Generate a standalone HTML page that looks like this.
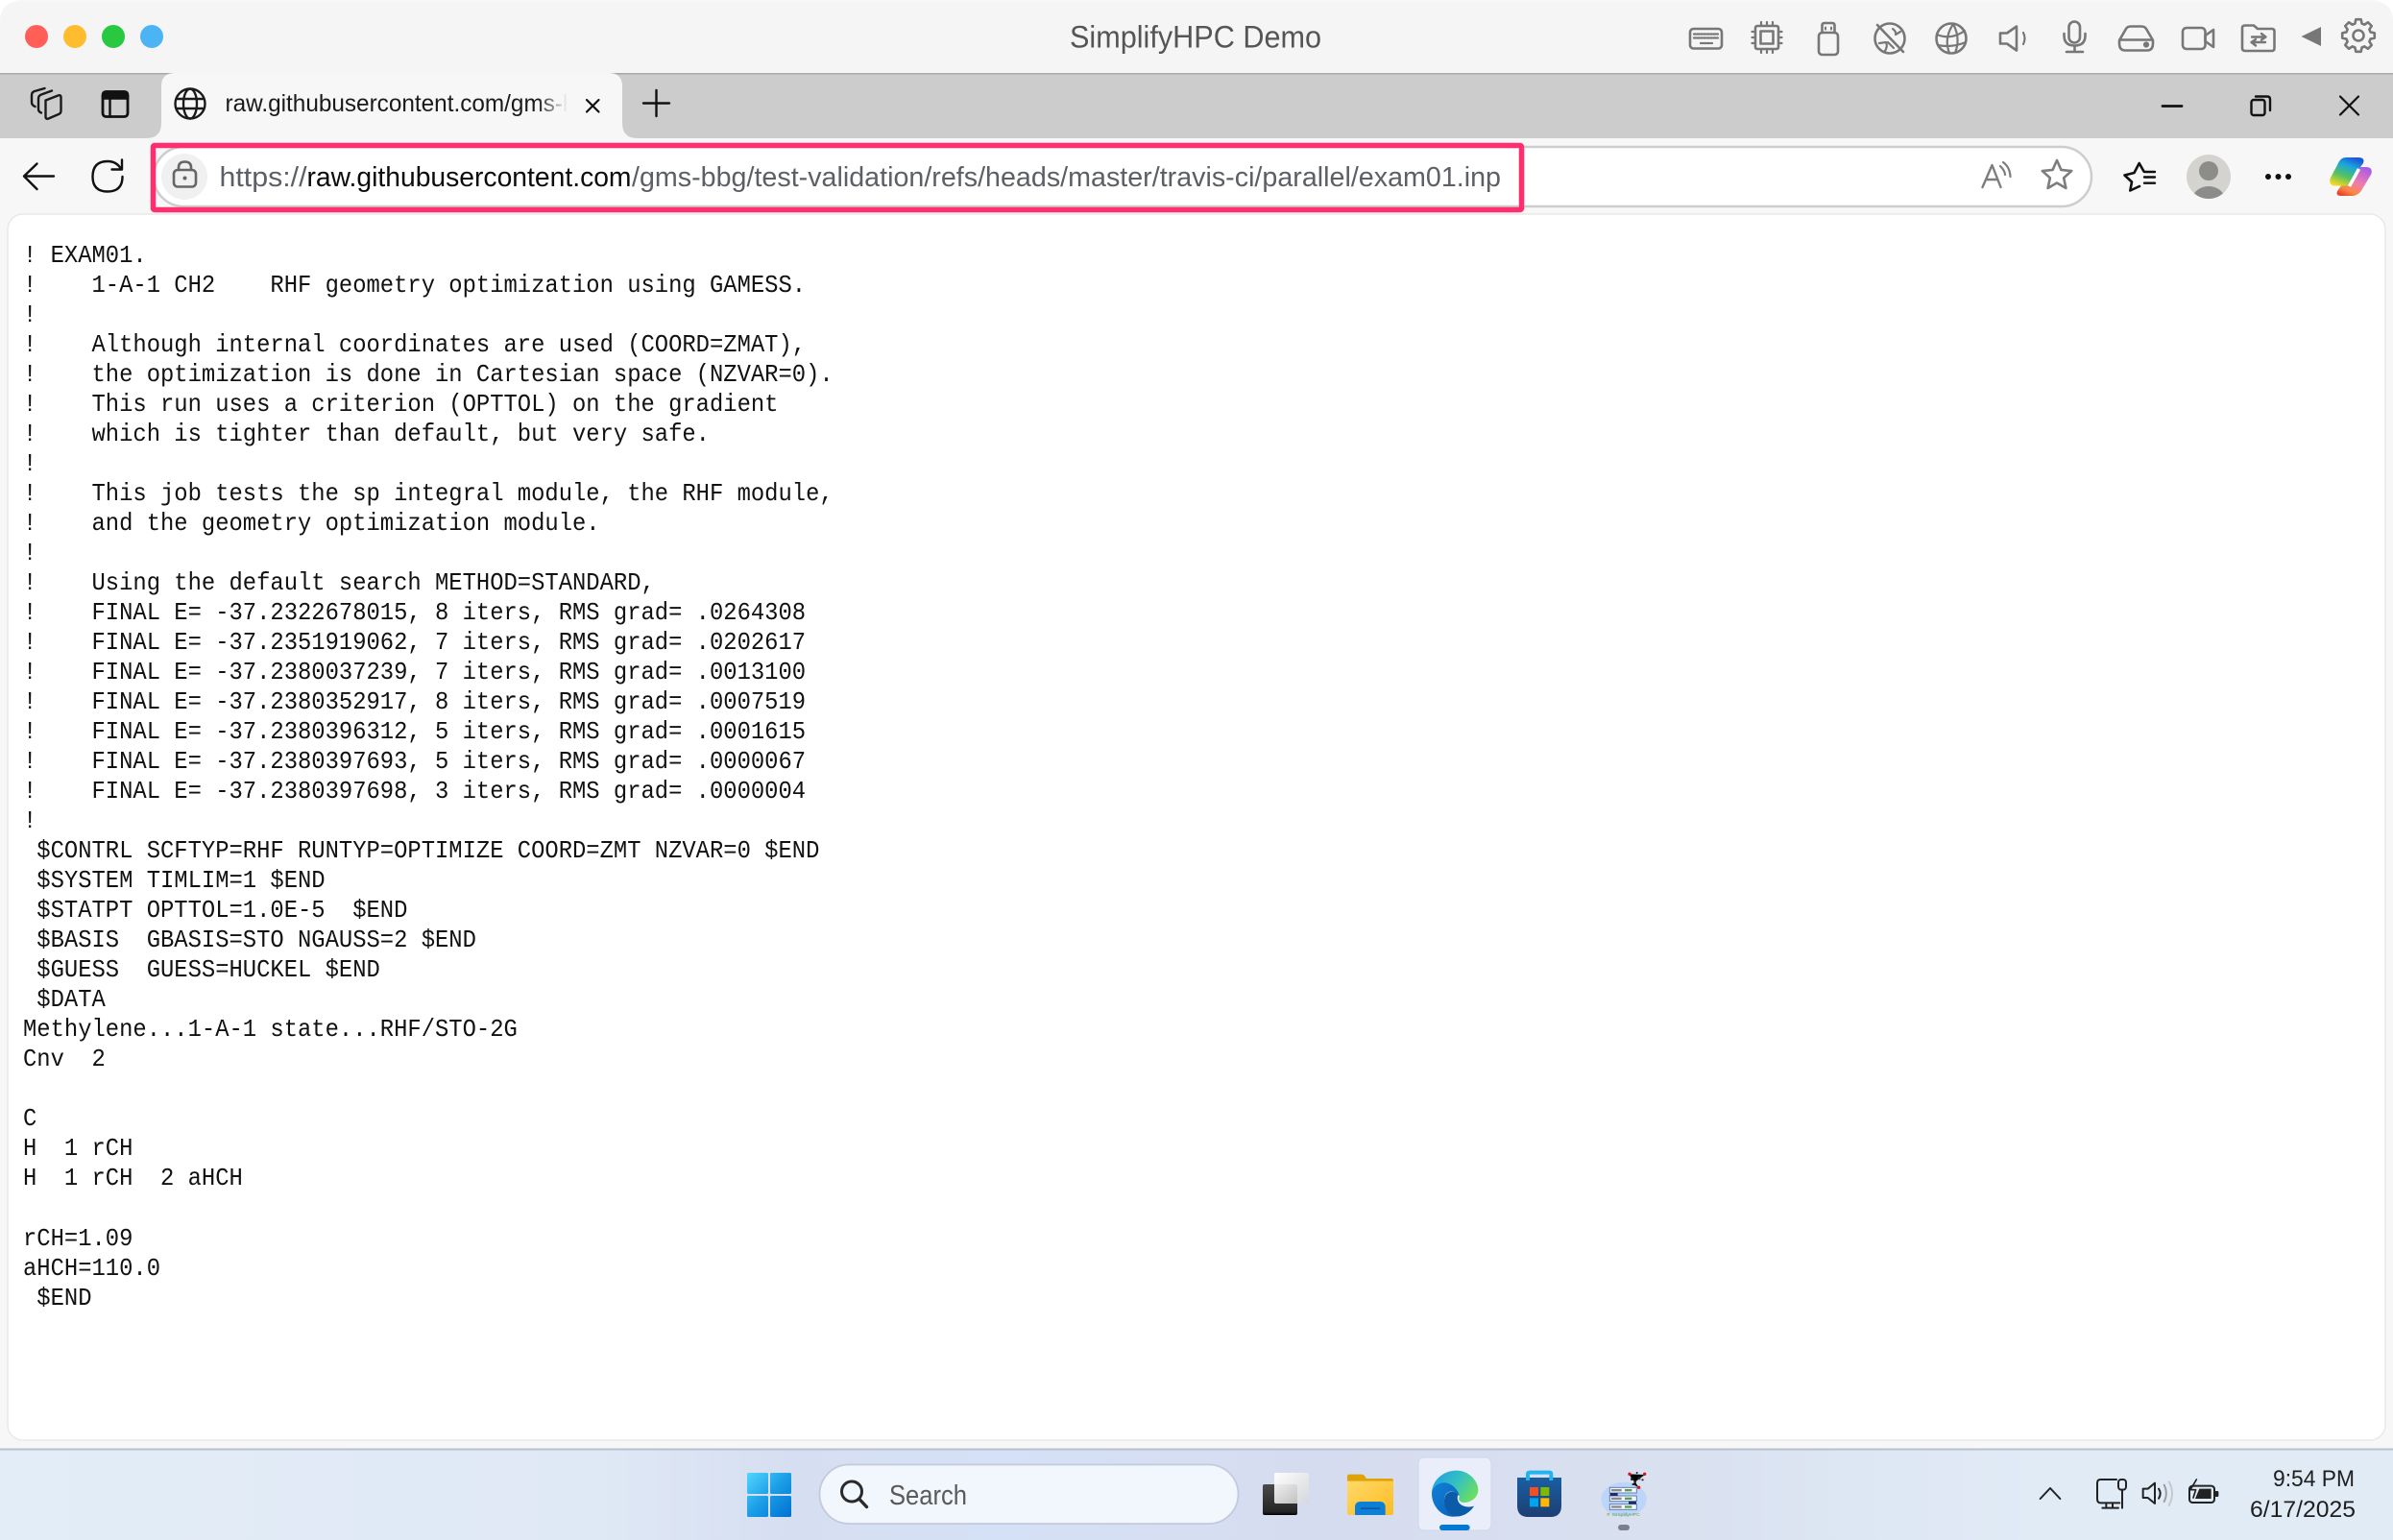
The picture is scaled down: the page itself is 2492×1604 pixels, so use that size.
<!DOCTYPE html>
<html lang="en"><head><meta charset="utf-8"><title>SimplifyHPC Demo</title>
<style>
html,body{margin:0;padding:0;background:#fff;width:2492px;height:1604px;overflow:hidden}
svg{position:absolute;left:0;top:0;display:block}
text{font-family:"Liberation Sans",sans-serif;white-space:pre}
pre{position:absolute;left:23.5px;top:250.5px;margin:0;font:26px/31.03px "Liberation Mono",monospace;color:#111;transform:scaleX(.9165);transform-origin:0 0;white-space:pre}
</style></head><body>
<svg width="2492" height="1604" viewBox="0 0 2492 1604" xmlns="http://www.w3.org/2000/svg">
<defs>
<linearGradient id="tb" x1="0" x2="1" y1="0" y2="0"><stop offset="0" stop-color="#e3edf7"/><stop offset=".25" stop-color="#dfe8f5"/><stop offset=".33" stop-color="#d6dff1"/><stop offset=".42" stop-color="#d5e1f6"/><stop offset=".55" stop-color="#d6dcef"/><stop offset=".7" stop-color="#d9e1f0"/><stop offset=".85" stop-color="#e1ebf6"/><stop offset="1" stop-color="#e1ebf6"/></linearGradient>
<linearGradient id="win" gradientUnits="userSpaceOnUse" x1="778" y1="1534" x2="824" y2="1580"><stop offset="0" stop-color="#52d6ff"/><stop offset=".5" stop-color="#1a9de6"/><stop offset="1" stop-color="#0070d2"/></linearGradient>
<linearGradient id="fade" x1="0" x2="1" y1="0" y2="0"><stop offset="0" stop-color="#f7f7f7" stop-opacity="0"/><stop offset="1" stop-color="#f7f7f7"/></linearGradient>
<linearGradient id="tv1" x1="0" x2="0" y1="0" y2="1"><stop offset="0" stop-color="#4b4b4b"/><stop offset=".9" stop-color="#242424"/><stop offset="1" stop-color="#000"/></linearGradient>
<linearGradient id="tv2" x1="0" x2="1" y1="0" y2="1"><stop offset="0" stop-color="#fff" stop-opacity=".98"/><stop offset="1" stop-color="#d8d8d8" stop-opacity=".8"/></linearGradient>
<linearGradient id="fy" x1="0" x2="1" y1="0" y2="1"><stop offset="0" stop-color="#ffd968"/><stop offset="1" stop-color="#fcbc23"/></linearGradient>
<linearGradient id="e1" x1="0" x2="1" y1=".2" y2=".7"><stop offset="0" stop-color="#1f9fe6"/><stop offset=".5" stop-color="#35c1c0"/><stop offset="1" stop-color="#6fe05a"/></linearGradient>
<linearGradient id="e2" x1="0" x2="1" y1="0" y2="1"><stop offset="0" stop-color="#0f80d8"/><stop offset="1" stop-color="#0c62b5"/></linearGradient>
<linearGradient id="st" x1="0" x2="0" y1="0" y2="1"><stop offset="0" stop-color="#1a5ea3"/><stop offset="1" stop-color="#1d3f73"/></linearGradient>
<linearGradient id="c1" x1=".7" x2=".25" y1="0" y2="1"><stop offset="0" stop-color="#1b57d8"/><stop offset=".3" stop-color="#1aa6dd"/><stop offset=".65" stop-color="#54c25d"/><stop offset="1" stop-color="#f4d823"/></linearGradient>
<linearGradient id="c2" x1=".8" x2=".2" y1="0" y2="1"><stop offset="0" stop-color="#a85be8"/><stop offset=".5" stop-color="#f07cae"/><stop offset=".8" stop-color="#fa8a45"/><stop offset="1" stop-color="#e8442e"/></linearGradient>
<clipPath id="av"><circle cx="2300" cy="184" r="23"/></clipPath>
<clipPath id="tc"><rect x="220" y="80" width="371" height="60"/></clipPath>
</defs>

<rect width="2492" height="1604" fill="#f7f7f7"/>
<path d="M0 78V22Q0 2 22 2H2470Q2492 2 2492 22V78Z" fill="#f5f5f5"/>
<path d="M0 0H22Q0 2 0 22ZM2492 0H2470Q2492 2 2492 22Z" fill="#fff"/>
<rect y="76" width="2492" height="68" fill="#cccccc"/>
<rect y="76" width="2492" height="1.5" fill="#a9a9a9"/>
<path d="M152 144Q168 144 168 128V90Q168 76 182 76H634Q648 76 648 90V128Q648 144 664 144Z" fill="#f7f7f7"/>

<rect x="8" y="223" width="2476" height="1277" rx="16" fill="#fff" stroke="#e9e9e9" stroke-width="1.5"/>

<circle cx="38" cy="38" r="12" fill="#ff5f57"/><circle cx="78" cy="38" r="12" fill="#febc2e"/><circle cx="118" cy="38" r="12" fill="#28c840"/><circle cx="158" cy="38" r="12" fill="#4cb3f5"/>

<text x="1114" y="49.5" font-size="32" fill="#555" textLength="262" lengthAdjust="spacingAndGlyphs">SimplifyHPC Demo</text>

<g fill="none" stroke="#777" stroke-width="2.6" stroke-linecap="round" stroke-linejoin="round">
<rect x="1760" y="30" width="33" height="20.5" rx="3.5"/>
<path d="M1764 35.5h25M1764 39.5h25M1771 45h12" stroke-dasharray="2 1.4" stroke-width="2.2"/>
<rect x="1828" y="27" width="24" height="24" rx="2"/><rect x="1833.5" y="32.5" width="13" height="13"/>
<path d="M1834 23v3M1840 23v3M1846 23v3M1834 52v3M1840 52v3M1846 52v3M1824.5 33h2M1824.5 39h2M1824.5 45h2M1853.5 33h2M1853.5 39h2M1853.5 45h2" stroke-width="2.2"/>
<rect x="1894" y="34" width="20" height="23" rx="3.5"/><path d="M1897.5 34V26.5Q1897.5 24 1900 24H1908Q1910.5 24 1910.5 26.5V34"/><path d="M1901 28.5v2M1907 28.5v2" stroke-width="2"/>
<circle cx="1968" cy="40" r="15.5"/><path d="M1955 26L1982 54"/><path d="M1971 30Q1975 33 1974 36L1979 33M1957 45L1964 44Q1966 48 1963 53M1966 44L1972 50" stroke-width="2.2"/>
<circle cx="2032" cy="40" r="15.5"/><path d="M2017 36Q2032 42 2046 32M2018 47Q2032 50 2047 44M2034 25Q2024 40 2030 55M2034 25Q2042 40 2036 55" stroke-width="2.2"/>
<path d="M2083 34.5V45.5H2090L2100 52.5V27.5L2090 34.5Z"/><path d="M2107 34Q2110 40 2107 46" stroke-width="2.2"/>
<rect x="2154.5" y="22.5" width="11.5" height="22" rx="5.75"/><path d="M2149.5 35V37Q2149.5 47.5 2160.5 47.5Q2171.5 47.5 2171.5 37V35M2160.5 47.5V53.5M2152 54H2169"/>
<path d="M2207 45V42L2214 30Q2215.5 27.5 2219 27.5H2230Q2233.5 27.5 2235 30L2242 42V45Q2242 52.5 2236 52.5H2213Q2207 52.5 2207 45Z"/><path d="M2207.5 41.5H2241.5"/><circle cx="2235" cy="46.5" r="1.8" fill="#777"/>
<rect x="2273" y="29" width="23.5" height="22" rx="4"/><path d="M2296.5 37L2305 31V49L2296.5 43Z"/>
<path d="M2335 33V29Q2335 26.5 2338 26.5H2347L2351 30H2366Q2368.5 30 2368.5 32.5V50Q2368.5 53 2366 53H2338Q2335 53 2335 50Z"/>
<path d="M2345 38.5H2359M2355 35L2359.5 38.5L2355 41.5M2359 44H2345M2349 41L2344.5 44L2349 47.5" stroke-width="2.4"/>
<path d="M2396.5 38L2417 28V48Z" fill="#777" stroke="none"/>
<path transform="translate(2456 37)" d="M-3.58-12.5L-2.66-16.79L2.66-16.79L3.58-12.5L6.31-11.37L9.99-13.75L13.75-9.99L11.37-6.31L12.5-3.58L16.79-2.66L16.79 2.66L12.5 3.58L11.37 6.31L13.75 9.99L9.99 13.75L6.31 11.37L3.58 12.5L2.66 16.79L-2.66 16.79L-3.58 12.5L-6.31 11.37L-9.99 13.75L-13.75 9.99L-11.37 6.31L-12.5 3.58L-16.79 2.66L-16.79-2.66L-12.5-3.58L-11.37-6.31L-13.75-9.99L-9.99-13.75L-6.31-11.37Z"/><circle cx="2456" cy="37" r="5.5"/>
</g>

<g fill="none" stroke="#1a1a1a" stroke-width="2.4" stroke-linecap="round" stroke-linejoin="round">
<path d="M47.5 104.5L60.5 99.5Q63.5 98.5 63.5 101.5V115.5Q63.5 118 61 119L50.5 123.5Q47.5 124.5 47.5 121.5Z"/>
<path d="M43 117.5Q40 116.5 40 113.5V103Q40 99.5 43 98.5L54 94.5"/>
<path d="M36.5 111Q33 109.5 33 106.5V99Q33 96 36 95L46.5 92"/>
<rect x="107" y="95.5" width="26" height="26" rx="3.5" stroke="#111" stroke-width="2.8"/><path d="M107 99Q107 95.5 110.5 95.5H129.5Q133 95.5 133 99V102.5H107Z" fill="#111" stroke="#111"/><path d="M114.5 102.5V121.5" stroke="#111"/>
<circle cx="198" cy="108" r="15.5"/><ellipse cx="198" cy="108" rx="7" ry="15.5"/><path d="M183.5 103H212.5M183.5 113H212.5"/>
<path d="M611 104L623.5 116.5M623.5 104L611 116.5" stroke="#111" stroke-width="2.2"/>
<path d="M683.5 94V121M670 107.5H697" stroke="#111"/>
<path d="M2252 110.5H2272" stroke="#111" stroke-width="2.8"/>
<rect x="2344.5" y="104" width="14" height="16" rx="2.5" stroke="#111"/><path d="M2349 100.5H2361Q2364 100.5 2364 103.5V115" stroke="#111"/>
<path d="M2437 100.5L2456 119.5M2456 100.5L2437 119.5" stroke="#111" stroke-width="2.2"/>
<path d="M56 183.5H25.5M38.5 170.5L25 183.5L38.5 197" stroke="#111" stroke-width="2.4"/>
<path d="M126 176Q121.5 168 112 168Q96.5 168 96.5 184Q96.5 199.5 112 199.5Q127.5 199.5 127.5 184M127 166.5V176.5H116.5" stroke="#111" stroke-width="2.4"/>
</g>
<text x="234.5" y="116" font-size="25" fill="#1a1a1a" textLength="365" lengthAdjust="spacingAndGlyphs" clip-path="url(#tc)">raw.githubusercontent.com/gms-b</text>
<rect x="560" y="80" width="31" height="60" fill="url(#fade)"/>

<rect x="160" y="153" width="2018" height="62" rx="31" fill="#fff" stroke="#cdcdcd" stroke-width="2.5"/>
<circle cx="192" cy="184" r="24" fill="#f0f0f0"/>
<g fill="none" stroke="#666" stroke-width="2.6" stroke-linecap="round"><rect x="181" y="177" width="23" height="17.5" rx="4"/><path d="M186 177V174.5Q186 168.5 192.5 168.5Q199 168.5 199 174.5V177"/></g><circle cx="192.5" cy="185.5" r="2" fill="#666"/>
<text x="228.5" y="194" font-size="29" fill="#5c6066" textLength="91" lengthAdjust="spacingAndGlyphs">https://</text>
<text x="319.5" y="194" font-size="29" fill="#0b0b0b" textLength="338" lengthAdjust="spacingAndGlyphs">raw.githubusercontent.com</text>
<text x="658" y="194" font-size="29" fill="#5c6066" textLength="905" lengthAdjust="spacingAndGlyphs">/gms-bbg/test-validation/refs/heads/master/travis-ci/parallel/exam01.inp</text>
<rect x="159.5" y="151.5" width="1425" height="67" rx="1.5" fill="none" stroke="#ff2e6e" stroke-width="5.5"/>

<g fill="none" stroke="#7d7d7d" stroke-width="2.4" stroke-linecap="round" stroke-linejoin="round">
<path d="M2064.5 195L2074.5 172L2083.5 195M2068 187H2080.5"/>
<path d="M2083 173Q2088 178 2088 182M2086 169Q2093 174 2093.5 184" stroke-width="2.2"/>
<path transform="translate(2142 183)" d="M0-16L4.41-6.07L15.2-4.94L7.13 2.32L9.4 12.94L0 7.5L-9.4 12.94L-7.13 2.32L-15.2-4.94L-4.41-6.07Z" stroke-width="2.6"/>
<path d="M2232.5 178.5L2227.7 170L2222.5 180L2212.5 182.5L2220 189.5L2218.3 198.5L2228 194" stroke="#111" stroke-width="2.6"/>
<path d="M2233 179H2244M2233 184.5H2244M2233 190.7H2244" stroke="#111" stroke-width="2.4"/>
</g>
<circle cx="2300" cy="184" r="23" fill="#d4d3cf"/>
<g clip-path="url(#av)" fill="#8c8c8a"><circle cx="2300" cy="178" r="10"/><ellipse cx="2300" cy="208" rx="17" ry="14"/></g>
<circle cx="2362" cy="184" r="3" fill="#111"/><circle cx="2372.5" cy="184" r="3" fill="#111"/><circle cx="2383" cy="184" r="3" fill="#111"/>
<path d="M2443 164H2456Q2463 164 2461 170L2456 177L2447 193.5H2432Q2425 193.5 2426.5 186L2434 172Q2437 164 2443 164Z" fill="url(#c1)"/>
<path d="M2458 174H2464Q2471 174 2469.5 181L2460 197Q2456 204 2449 204H2438Q2432 204 2434 199L2438 193.5H2446L2454 177Z" fill="url(#c2)"/>
<path d="M2456.5 176L2446.5 194" stroke="#fff" stroke-width="3.5" fill="none"/>

<rect y="1510" width="2492" height="94" fill="url(#tb)"/>
<rect y="1508.5" width="2492" height="2" fill="#b8c0cf"/>
<g fill="url(#win)"><rect x="778" y="1534" width="22" height="22" rx="1.5"/><rect x="802" y="1534" width="22" height="22" rx="1.5"/><rect x="778" y="1558" width="22" height="22" rx="1.5"/><rect x="802" y="1558" width="22" height="22" rx="1.5"/></g>
<rect x="853.5" y="1525.5" width="436" height="61.5" rx="30.7" fill="#f2f6fd" stroke="#c2cadd" stroke-width="1.8"/>
<circle cx="887" cy="1553.5" r="10.5" fill="none" stroke="#2a2a2a" stroke-width="3"/><path d="M895 1561.5L902.5 1569.5" stroke="#2a2a2a" stroke-width="3.4" stroke-linecap="round"/>
<text x="926" y="1567" font-size="29" fill="#5a5a5a" textLength="81" lengthAdjust="spacingAndGlyphs">Search</text>

<rect x="1477" y="1518" width="76" height="76" rx="6" fill="#e9eefa" stroke="#d0d7e8" stroke-width="1"/>
<g transform="translate(1290 1510) scale(.33333)">
<rect x="75" y="108" width="108" height="96" rx="6" fill="url(#tv1)"/>
<rect x="111" y="72" width="108" height="96" rx="6" fill="url(#tv2)"/>
<path d="M339 100V84Q339 77 346 77H385Q392 77 398 90H477Q483 90 483 96V110H339Z" fill="#e0a306"/>
<path d="M339 98H483V198Q483 204 477 204H345Q339 204 339 198Z" fill="url(#fy)"/>
<path d="M363 204V180Q363 162 381 162H440Q458 162 458 180V204Z" fill="#0f7fd6"/>
<rect x="381" y="181" width="60" height="5" fill="#0a5ba5"/>
<path d="M603 137C603 95 640 65 680 65C722 65 748 100 748 125C748 150 725 165 705 165C690 165 684 155 690 145C680 120 660 105 640 107C620 109 605 120 603 137Z" fill="url(#e1)"/>
<path d="M603 137C605 112 630 100 650 104C668 108 685 125 690 145C675 125 650 125 643 148C637 175 655 200 680 208C640 216 603 180 603 137Z" fill="url(#e2)"/>
<path d="M643 150C648 130 672 125 686 140C680 150 684 165 695 172C708 180 722 180 735 176C722 198 695 212 675 208C650 200 638 175 643 150Z" fill="#0c5ba8"/>
<rect x="627" y="234" width="95" height="18" rx="9" fill="#0078d4"/>
<path d="M870 87H1008V175Q1008 210 973 210H905Q870 210 870 175Z" fill="url(#st)"/>
<path d="M903 96V76Q903 71 910 71H970Q976 71 976 76V96" fill="none" stroke="#22b4ee" stroke-width="12"/>
<rect x="909" y="117" width="27" height="27" fill="#f25022"/><rect x="943" y="117" width="27" height="27" fill="#7fba00"/><rect x="909" y="151" width="27" height="27" fill="#00a4ef"/><rect x="943" y="151" width="27" height="27" fill="#ffb900"/>
<ellipse cx="1203" cy="155" rx="71" ry="54" fill="#bcd5f8"/>
<g fill="#f4f6fb" stroke="#5d7fb8" stroke-width="3"><rect x="1159" y="118" width="84" height="17"/><rect x="1159" y="144" width="84" height="17"/><rect x="1159" y="170" width="84" height="17"/></g>
<g fill="#8a8a8a"><rect x="1164" y="123" width="32" height="7"/><rect x="1164" y="149" width="32" height="7"/><rect x="1164" y="175" width="32" height="7"/></g>
<g fill="#5aa04a"><rect x="1206" y="123" width="22" height="7"/><rect x="1206" y="149" width="22" height="7"/><rect x="1206" y="175" width="22" height="7"/></g>
<rect x="1160" y="135" width="24" height="9" fill="#1b2e6b"/><rect x="1218" y="161" width="24" height="9" fill="#1b2e6b"/>
<g stroke="#555" stroke-width="2"><path d="M1221 76L1228 92L1238 100L1250 92L1268 78M1238 100L1232 108L1250 118M1250 92L1262 94"/></g>
<g fill="#222"><circle cx="1228" cy="92" r="4"/><circle cx="1238" cy="100" r="4"/><circle cx="1250" cy="88" r="4"/><circle cx="1232" cy="108" r="3.5"/><circle cx="1262" cy="94" r="3"/><circle cx="1244" cy="72" r="3"/></g>
<g fill="#d01818"><circle cx="1221" cy="76" r="5"/><circle cx="1268" cy="76" r="5"/><circle cx="1250" cy="118" r="5"/></g>
<text x="1148" y="207" font-size="15" fill="#6a9e4a" textLength="106" lengthAdjust="spacingAndGlyphs">✕ SimplifyHPC</text>
<rect x="1185" y="234" width="36" height="18" rx="9" fill="#7b7f8d"/>
</g>

<g transform="translate(2080 1480) scale(.33333)" fill="none" stroke="#222" stroke-width="6" stroke-linecap="round" stroke-linejoin="round">
<path d="M134 243L165 210L196 243"/>
<path d="M372 183H323Q312 183 312 194V244Q312 256 323 256H382"/><path d="M340 256V272M360 256V272M328 272H378"/>
<rect x="378" y="183" width="24" height="32" rx="9"/><path d="M390 215V272"/>
<path d="M455 212H470L492 194V258L470 240H455Z"/><path d="M504 212Q514 226 504 242"/>
<path d="M521 200Q534 226 521 252" stroke="#9a9ea4"/><path d="M536 190Q556 226 536 264" stroke="#c5c9ce"/>
<rect x="600" y="203" width="78" height="52" rx="10"/><rect x="680" y="219" width="11" height="18" rx="3" fill="#222" stroke="none"/>
<path d="M618 243L631 212H668V243Z" fill="#222" stroke="none"/>
<path d="M622 183L603 215H620L612 240" stroke-width="5"/>
</g>
<text x="2367" y="1548" font-size="24.5" fill="#1f1f1f" textLength="85" lengthAdjust="spacingAndGlyphs">9:54 PM</text>
<text x="2343" y="1580" font-size="24.5" fill="#1f1f1f" textLength="110" lengthAdjust="spacingAndGlyphs">6/17/2025</text>
</svg>
<pre>! EXAM01.
!    1-A-1 CH2    RHF geometry optimization using GAMESS.
!
!    Although internal coordinates are used (COORD=ZMAT),
!    the optimization is done in Cartesian space (NZVAR=0).
!    This run uses a criterion (OPTTOL) on the gradient
!    which is tighter than default, but very safe.
!
!    This job tests the sp integral module, the RHF module,
!    and the geometry optimization module.
!
!    Using the default search METHOD=STANDARD,
!    FINAL E= -37.2322678015, 8 iters, RMS grad= .0264308
!    FINAL E= -37.2351919062, 7 iters, RMS grad= .0202617
!    FINAL E= -37.2380037239, 7 iters, RMS grad= .0013100
!    FINAL E= -37.2380352917, 8 iters, RMS grad= .0007519
!    FINAL E= -37.2380396312, 5 iters, RMS grad= .0001615
!    FINAL E= -37.2380397693, 5 iters, RMS grad= .0000067
!    FINAL E= -37.2380397698, 3 iters, RMS grad= .0000004
!
 $CONTRL SCFTYP=RHF RUNTYP=OPTIMIZE COORD=ZMT NZVAR=0 $END
 $SYSTEM TIMLIM=1 $END
 $STATPT OPTTOL=1.0E-5  $END
 $BASIS  GBASIS=STO NGAUSS=2 $END
 $GUESS  GUESS=HUCKEL $END
 $DATA
Methylene...1-A-1 state...RHF/STO-2G
Cnv  2

C
H  1 rCH
H  1 rCH  2 aHCH

rCH=1.09
aHCH=110.0
 $END
</pre>
</body></html>
